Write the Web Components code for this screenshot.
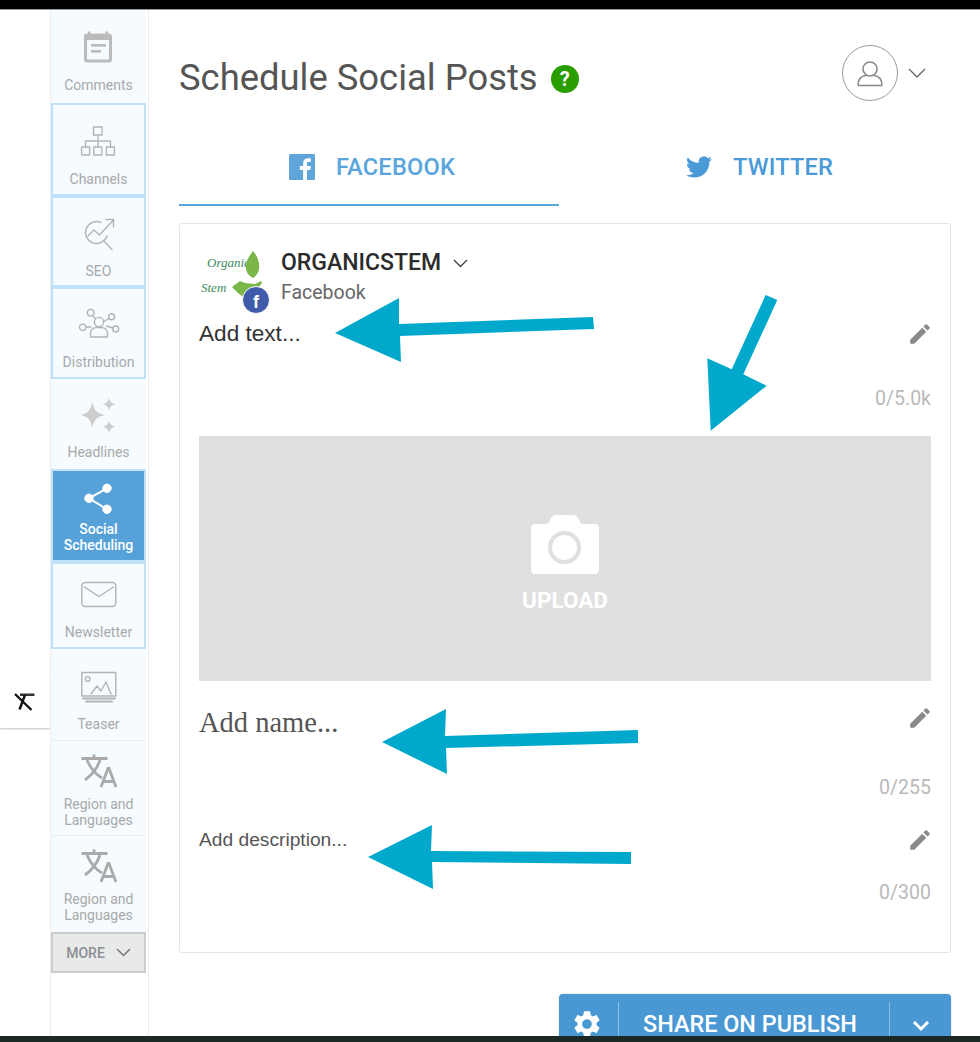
<!DOCTYPE html>
<html lang="en">
<head>
<meta charset="utf-8">
<title>Schedule Social Posts</title>
<style>
html,body{margin:0;padding:0;background:#fff;}
body{font-family:Roboto,"Liberation Sans",sans-serif;width:980px;height:1042px;overflow:hidden;position:relative;}
</style>
</head>
<body>
<app-shell>
  <side-bar slot="nav">
    <side-item icon="comments" h="93" pt="20" gap="13">Comments</side-item>
    <side-item icon="channels" h="93" pt="22" gap="12" boxed>Channels</side-item>
    <side-item icon="seo" h="91" pt="20" gap="13" boxed>SEO</side-item>
    <side-item icon="distribution" h="92" pt="19" gap="14" boxed>Distribution</side-item>
    <side-item icon="headlines" h="90" pt="19" gap="12">Headlines</side-item>
    <side-item icon="social" h="93" pt="13" gap="5" active>Social<br>Scheduling</side-item>
    <side-item icon="newsletter" h="87" pt="16" gap="12" boxed>Newsletter</side-item>
    <side-item icon="teaser" h="92" pt="22" gap="11" ruled>Teaser</side-item>
    <side-item icon="region" h="95" pt="13" gap="8" ruled>Region and<br>Languages</side-item>
    <side-item icon="region" h="96" pt="13" gap="8">Region and<br>Languages</side-item>
    <more-button>MORE</more-button>
  </side-bar>
  <clear-tab slot="gutter"></clear-tab>

  <page-header>Schedule Social Posts</page-header>

  <tab-bar>
    <social-tab icon="facebook" active style="width:380px;padding-left:6px">FACEBOOK</social-tab>
    <social-tab icon="twitter" style="width:392px;padding-left:9px;color:#4a9ad8">TWITTER</social-tab>
  </tab-bar>

  <post-card>
    <account-row></account-row>
    <edit-field counter="0/5.0k" style="--top:6px;--gap:37px;--bottom:25px;font:22.6px 'Liberation Sans',sans-serif;color:#333">Add text...</edit-field>
    <upload-box>UPLOAD</upload-box>
    <edit-field counter="0/255" style="--top:26px;--gap:37px;--bottom:0px;--pencil-up:-10px;font:28.5px 'Liberation Serif',serif;color:#555">Add name...</edit-field>
    <edit-field counter="0/300" style="--top:24px;--gap:25px;--bottom:47px;font:19.2px 'Liberation Sans',sans-serif;color:#555">Add description...</edit-field>
  </post-card>

  <share-button>SHARE ON PUBLISH</share-button>
</app-shell>
<arrow-overlay></arrow-overlay>

<script>
const STROKE = 'fill="none" stroke="#b4b4b4" stroke-width="1.4" stroke-linecap="round" stroke-linejoin="round"'
const ICONS = {
  comments: `<path fill="#bbb" fill-rule="evenodd" d="M7 1.5h2.5v2h15v-2H27v2h.5A3 3 0 0 1 31 6.5v23a3 3 0 0 1-3 3H6a3 3 0 0 1-3-3v-23a3 3 0 0 1 3-3h1zM6 10v18.5a1 1 0 0 0 1 1h20a1 1 0 0 0 1-1V10z"/><rect x="10" y="14" width="15" height="2.6" fill="#bbb"/><rect x="10" y="20" width="10" height="2.6" fill="#bbb"/>`,
  channels: `<g ${STROKE}><rect x="12.5" y="2" width="8.5" height="8"/><path d="M17 10v6M4.5 22v-6h25v6M17 16v6"/><rect x="0.6" y="22" width="8" height="8"/><rect x="12.8" y="22" width="8" height="8"/><rect x="25.4" y="22" width="8" height="8"/></g>`,
  seo: `<g ${STROKE}><path d="M20 6.4A11 11 0 1 0 26 20"/><path d="M7 20l6-6 5.5 5L32 4.5M25 3.5h7.5V11M23 25l8 8.5"/></g>`,
  distribution: `<g ${STROKE}><circle cx="20" cy="16" r="4.6"/><path d="M11.5 31v-3a6 6 0 0 1 5.5-6.5h6a6 6 0 0 1 5.5 6.5v3z"/><circle cx="11.7" cy="6.7" r="3.3"/><circle cx="32.7" cy="10.7" r="3"/><circle cx="3.7" cy="21.3" r="3.2"/><circle cx="36.7" cy="23" r="3"/><path d="M13.5 9.5l3 3M30 12.5l-5 3M7 21h5M33.7 22l-6-2"/></g>`,
  headlines: `<g fill="#cdcdcd"><path d="M11.3 4c1.4 8 4.6 11.6 13 13-8.4 1.4-11.6 5-13 13-1.4-8-4.6-11.6-11.3-13 6.700-1.400 9.900-5 11.300-13z"/><path d="M28 0c.7 3.700 2.800 5.500 6.800 6.300-4 .8-6.100 2.600-6.800 6.500-.7-3.900-2.800-5.700-6.800-6.500 4-.8 6.100-2.600 6.800-6.300z"/><path d="M28 22.500c.7 3.700 2.800 5.500 6.800 6.300-4 .8-6.100 2.600-6.800 6.500-.7-3.900-2.800-5.700-6.800-6.500 4-.8 6.100-2.600 6.800-6.300z"/></g>`,
  social: `<g fill="#fff" stroke="#fff"><circle cx="26" cy="6.300" r="4.200"/><circle cx="8" cy="16.300" r="4.200"/><circle cx="26" cy="27.300" r="4.200"/><path fill="none" stroke-width="2" d="M26 6.300L8 16.300l18 11"/></g>`,
  newsletter: `<g ${STROKE} stroke-width="1.6"><rect x="0.8" y="4.500" width="34" height="24" rx="3.500"/><path d="M3.500 9l14.500 9.500L32.500 9"/></g>`,
  teaser: `<g ${STROKE}><rect x="0.800" y="1.500" width="34" height="23.500"/><circle cx="6.700" cy="8" r="2.400"/><path d="M10 23l6-8 4 5 5-9 5 12"/><path stroke-width="1.800" d="M2 27.500h32M5 30.500h26"/></g>`,
  region: `<g fill="none" stroke="#aaa" stroke-width="2.800"><path d="M0.500 4.500h26M13 0.500v4M6 6c3 7 8 14 15 18M19 6C16 15 11 21 4 26M20 33L27 14.500h1L35 33M22.500 27.500h10"/></g>`
}

// every element below: a small class, its own template in the shadow root
function makeEl(name, html, extra){
  const tpl = document.createElement('template')
  tpl.innerHTML = html
  class El extends HTMLElement {
    constructor(){
      super()
      this.attachShadow({mode:'open'})
      this.shadowRoot.appendChild(tpl.content.cloneNode(true))
      if(extra) extra(this, this.shadowRoot)
    }
  }
  customElements.define(name, El)
}

makeEl('app-shell', `<style>
  :host{display:flex;flex-direction:column;width:980px;height:1042px;}
  .top{height:9px;background:#000;border-bottom:1px solid #9a9a9a;flex:none;}
  .bottom{height:6px;background:#1b2825;flex:none;}
  .row{flex:1;display:flex;min-height:0;overflow:hidden;}
  .gutter{width:50px;flex:none;padding-top:665px;box-sizing:border-box;}
  .main{flex:none;width:772px;margin-left:30px;display:flex;flex-direction:column;}
</style>
<div class="top"></div>
<div class="row">
  <div class="gutter"><slot name="gutter"></slot></div>
  <slot name="nav"></slot>
  <div class="main"><slot></slot></div>
</div>
<div class="bottom"></div>`)

makeEl('side-bar', `<style>
  :host{display:flex;flex-direction:column;flex:none;width:99px;box-sizing:border-box;border-left:1px solid #ececec;border-right:1px solid #ececec;padding-right:2px;}
</style><slot></slot>`)

makeEl('side-item', `<style>
  :host{display:flex;flex-direction:column;align-items:center;box-sizing:border-box;background:#f5fbff;color:#a9a9a9;font:14px/16px Roboto,sans-serif;text-align:center;flex:none;}
  :host([boxed]){border:2px solid #bfe1f9;margin-bottom:0;}
  :host([ruled]){border-bottom:1px solid #e9eced;}
  :host([active]){background:#56a2d8;color:#fff;font-weight:500;border:2px solid #c4e2f7;}
  svg{width:36px;height:34px;flex:none;overflow:visible;}
</style><svg viewBox="0 0 36 34"></svg><slot></slot>`, (el, root) => {
  const svg = root.querySelector('svg')
  const icon = el.getAttribute('icon')
  const bw = (el.hasAttribute('boxed') || el.hasAttribute('active')) ? 2 : 0
  svg.innerHTML = ICONS[icon]
  if(icon === 'distribution'){
    svg.setAttribute('viewBox','0 0 40 34')
    svg.style.width = '40px'
  }
  el.style.height = el.getAttribute('h') + 'px'
  el.style.paddingTop = (el.getAttribute('pt') - bw) + 'px'
  svg.style.marginBottom = el.getAttribute('gap') + 'px'
})

makeEl('more-button', `<style>
  :host{display:flex;align-items:center;justify-content:center;gap:11px;height:41px;box-sizing:border-box;border:2px solid #ccc;background:#e8e9e9;color:#8b8f93;font:500 14px Roboto,sans-serif;flex:none;}
  svg{width:15px;height:9px;}
</style><slot></slot><svg viewBox="0 0 15 9"><path d="M1 1l6.500 6.500L14 1" fill="none" stroke="#777" stroke-width="1.500"/></svg>`)

makeEl('clear-tab', `<style>
  :host{display:flex;align-items:center;justify-content:center;height:53px;width:50px;background:#fff;box-shadow:0 1px 2px rgba(0,0,0,.25);}
  svg{width:22px;height:18px;}
</style><svg viewBox="0 0 22 18"><path d="M6 0.500h14.500V3H6z" fill="#333"/><path d="M1 1l16.500 16M11 2L5.500 16.500" fill="none" stroke="#111" stroke-width="2.400"/></svg>`)

makeEl('page-header', `<style>
  :host{display:flex;justify-content:space-between;height:120px;box-sizing:border-box;flex:none;padding-right:25px;}
  h1{margin:0;padding-top:44px;font:400 36.400px/48px Roboto,sans-serif;color:#555;display:flex;align-items:flex-start;}
  .help{width:28px;height:28px;border-radius:50%;background:#2a9d00;color:#fff;font:700 20px/28px Roboto,sans-serif;text-align:center;margin:11px 0 0 13px;}
  .user{display:flex;align-items:center;gap:10px;padding-top:35px;height:56px;}
  .circle{width:56px;height:56px;box-sizing:border-box;border:1.500px solid #999;border-radius:50%;display:flex;align-items:center;justify-content:center;}
  .circle svg{width:28px;height:28px;}
  .chev{width:18px;height:10px;margin-top:-1px;}
</style>
<h1><slot></slot><span class="help">?</span></h1>
<div class="user">
  <div class="circle"><svg viewBox="0 0 28 28"><circle cx="14" cy="10" r="7" fill="none" stroke="#888" stroke-width="1.600"/><path d="M2 26.500c0-6 2.500-9.500 8-10M26 26.500c0-6-2.500-9.500-8-10M2 26.500h24" fill="none" stroke="#888" stroke-width="1.600"/></svg></div>
  <svg class="chev" viewBox="0 0 18 10"><path d="M1 1l8 8 8-8" fill="none" stroke="#666" stroke-width="1.300"/></svg>
</div>`)

makeEl('tab-bar', `<style>
  :host{display:flex;height:76px;flex:none;}
</style><slot></slot>`)

const TAB_ICONS = {
  facebook: `<rect width="26" height="26" rx="1.500" fill="#5fa5da"/><path fill="#fff" d="M18 26V16h3.300l.5-3.900H18V9.700c0-1.100.3-1.900 1.900-1.900h2V4.400c-.4 0-1.600-.2-2.900-.2-2.900 0-4.900 1.800-4.900 5v2.900h-3.300V16h3.300v10z"/>`,
  twitter: `<path transform="scale(1.083)" fill="#4a9ad8" d="M23.953 4.570a10 10 0 01-2.825.775 4.958 4.958 0 002.163-2.723c-.951.555-2.005.959-3.127 1.184a4.920 4.920 0 00-8.384 4.482C7.690 8.095 4.067 6.130 1.640 3.162a4.822 4.822 0 00-.666 2.475c0 1.710.870 3.213 2.188 4.096a4.904 4.904 0 01-2.228-.616v.060a4.923 4.923 0 003.946 4.827 4.996 4.996 0 01-2.212.085 4.936 4.936 0 004.604 3.417 9.867 9.867 0 01-6.102 2.105c-.390 0-.779-.023-1.170-.067a13.995 13.995 0 007.557 2.209c9.053 0 13.998-7.496 13.998-13.985 0-.210 0-.420-.015-.630A9.935 9.935 0 0024 4.590z"/>`
}
makeEl('social-tab', `<style>
  :host{display:flex;align-items:center;justify-content:center;gap:21px;box-sizing:border-box;height:76px;color:#5aa5dc;font:500 23.600px Roboto,sans-serif;letter-spacing:.2px;border-bottom:2px solid transparent;}
  :host([active]){border-bottom-color:#5aa5dc;}
  svg{width:26px;height:26px;flex:none;}
</style><svg viewBox="0 0 26 26"></svg><slot></slot>`, (el, root) => {
  root.querySelector('svg').innerHTML = TAB_ICONS[el.getAttribute('icon')]
})

makeEl('post-card', `<style>
  :host{display:block;box-sizing:border-box;margin-top:17px;height:730px;flex:none;border:1px solid #e4e4e4;border-radius:3px;padding:26px 19px 0;background:#fff;}
</style><slot></slot>`)

makeEl('account-row', `<style>
  :host{display:flex;height:62px;}
  .logo{width:72px;height:62px;flex:none;margin-right:10px;overflow:visible;}
  .name{font:500 23px/26px Roboto,sans-serif;color:#2b2b2b;display:flex;align-items:center;gap:12px;}
  .sub{font:400 19.500px/26px Roboto,sans-serif;color:#666;margin-top:4px;}
  .name svg{width:15px;height:9px;}
</style>
<svg class="logo" viewBox="0 0 72 62">
  <text x="8" y="17" font-family="Liberation Serif" font-style="italic" font-size="13" fill="#3d8a5d">Organic</text>
  <text x="2" y="42" font-family="Liberation Serif" font-style="italic" font-size="13" fill="#3d8a5d">Stem</text>
  <path d="M54 1c5 6 7 12 6 18-1 5-4 8-6 9-4-2-8-6-7-13 .5-5 4-10 7-14z" fill="#7ab648"/>
  <path d="M33 37l8-6 5 2 10 1 6-3 1 2-7 9-9 2 0 5-8-6z" fill="#7ab648"/>
  <circle cx="57" cy="50" r="13.500" fill="#3f5ba9" stroke="#fff" stroke-width="1"/>
  <text x="57" y="58" text-anchor="middle" font-family="Liberation Sans" font-weight="700" font-size="18" fill="#fff">f</text>
</svg>
<div>
  <div class="name">ORGANICSTEM<svg viewBox="0 0 15 9"><path d="M1 1l6.500 6.500L14 1" fill="none" stroke="#444" stroke-width="1.400"/></svg></div>
  <div class="sub">Facebook</div>
</div>`)

makeEl('edit-field', `<style>
  :host{display:block;padding-top:var(--top);padding-bottom:var(--bottom);}
  .line{display:flex;justify-content:space-between;align-items:center;height:32px;line-height:32px;}
  svg{width:26px;height:26px;flex:none;margin-right:-2px;margin-top:var(--pencil-up,0);}
  .count{margin-top:var(--gap);font:19.500px/24px Roboto,sans-serif;color:#b9b9b9;text-align:right;}
</style>
<div class="line"><span><slot></slot></span>
<svg viewBox="0 0 24 24"><path fill="#8a8a8a" d="M3 17.250V21h3.750L17.810 9.940l-3.750-3.750L3 17.250zM20.710 7.040a1 1 0 000-1.410l-2.340-2.340a1 1 0 00-1.410 0l-1.830 1.830 3.750 3.750 1.830-1.830z"/></svg></div>
<div class="count"></div>`, (el, root) => {
  root.querySelector('.count').textContent = el.getAttribute('counter')
})

makeEl('upload-box', `<style>
  :host{display:flex;flex-direction:column;align-items:center;height:245px;box-sizing:border-box;padding-top:79px;background:#e0e0e0;color:#fff;font:700 22.500px/26px Roboto,sans-serif;}
  svg{width:68px;height:59px;margin-bottom:13px;flex:none;}
</style>
<svg viewBox="0 0 68 59"><path fill="#fff" d="M4 9h12.500c1-1.500 2-3 3-5 1.200-2.500 3-4 5.500-4h17c2.500 0 4.500 1.500 5.500 4 1 2 2 3.500 3 5H64c2.200 0 4 1.800 4 4v42c0 2.200-1.800 4-4 4H4c-2.200 0-4-1.800-4-4V13c0-2.200 1.800-4 4-4z"/><circle cx="33.500" cy="32.500" r="14.500" fill="none" stroke="#e0e0e0" stroke-width="4"/></svg>
<slot></slot>`)

makeEl('share-button', `<style>
  :host{display:flex;align-items:center;align-self:flex-end;flex:none;width:392px;height:60px;margin-top:41px;box-sizing:border-box;background:#4a98d3;border-radius:4px;color:#fff;font:500 23.400px Roboto,sans-serif;box-shadow:0 0 2px rgba(0,0,0,.2);}
  .gear{width:60px;height:44px;display:flex;align-items:center;justify-content:center;border-right:1px solid #8dbfe5;box-sizing:border-box;padding-right:4px;flex:none;}
  .gear svg{width:32px;height:32px;}
  .label{flex:1;padding-left:24px;white-space:nowrap;}
  .drop{width:62px;height:44px;display:flex;align-items:center;justify-content:center;border-left:1px solid #8dbfe5;box-sizing:border-box;flex:none;}
  .drop svg{width:18px;height:12px;margin-top:3px;}
</style>
<div class="gear"><svg viewBox="0 0 24 24"><path fill="#fff" d="M19.140 12.940c.04-.3.060-.61.060-.94 0-.32-.02-.64-.07-.94l2.030-1.580a.49.49 0 00.12-.61l-1.920-3.320a.488.488 0 00-.59-.22l-2.390.96c-.5-.38-1.030-.7-1.620-.94l-.36-2.540a.484.484 0 00-.48-.41h-3.840c-.24 0-.43.17-.47.41l-.36 2.540c-.59.24-1.130.57-1.620.94l-2.390-.96c-.22-.08-.47 0-.59.22L2.740 8.870c-.12.21-.08.47.12.61l2.030 1.580c-.05.3-.09.63-.09.94s.02.64.07.94l-2.030 1.580a.49.49 0 00-.12.61l1.920 3.320c.12.22.37.29.59.22l2.390-.96c.5.38 1.030.7 1.620.94l.36 2.540c.05.24.24.41.48.41h3.840c.24 0 .44-.17.47-.41l.36-2.540c.59-.24 1.130-.56 1.620-.94l2.390.96c.22.08.47 0 .59-.22l1.920-3.320c.12-.22.070-.47-.12-.61l-2.010-1.580zM12 15.600c-1.980 0-3.600-1.620-3.600-3.600s1.620-3.600 3.600-3.600 3.600 1.620 3.600 3.600-1.620 3.600-3.600 3.600z"/></svg></div>
<div class="label"><slot></slot></div>
<div class="drop"><svg viewBox="0 0 18 12"><path d="M2 2l7 7 7-7" fill="none" stroke="#fff" stroke-width="3"/></svg></div>`)

// the annotation arrows lie over the page, so absolute is right here
makeEl('arrow-overlay', `<style>
  :host{position:absolute;left:0;top:0;width:980px;height:1042px;pointer-events:none;}
  svg{width:980px;height:1042px;display:block;}
  polygon{fill:#00a9cc;}
</style>
<svg viewBox="0 0 980 1042">
  <polygon points="335,333 399,298 399,324 593,317 594,329 400,336 401,362"/>
  <polygon points="765.700,295 777.300,300 743.300,374.300 766.700,385.700 710.700,430.700 707.300,358.300 731.700,369.300"/>
  <polygon points="382,742 446,709 445,736 638,730 638,743 446,748 447,774"/>
  <polygon points="368,857 432,825 431,851 631,852 631,864 432,862 433,889"/>
</svg>`)
</script>
</body>
</html>
